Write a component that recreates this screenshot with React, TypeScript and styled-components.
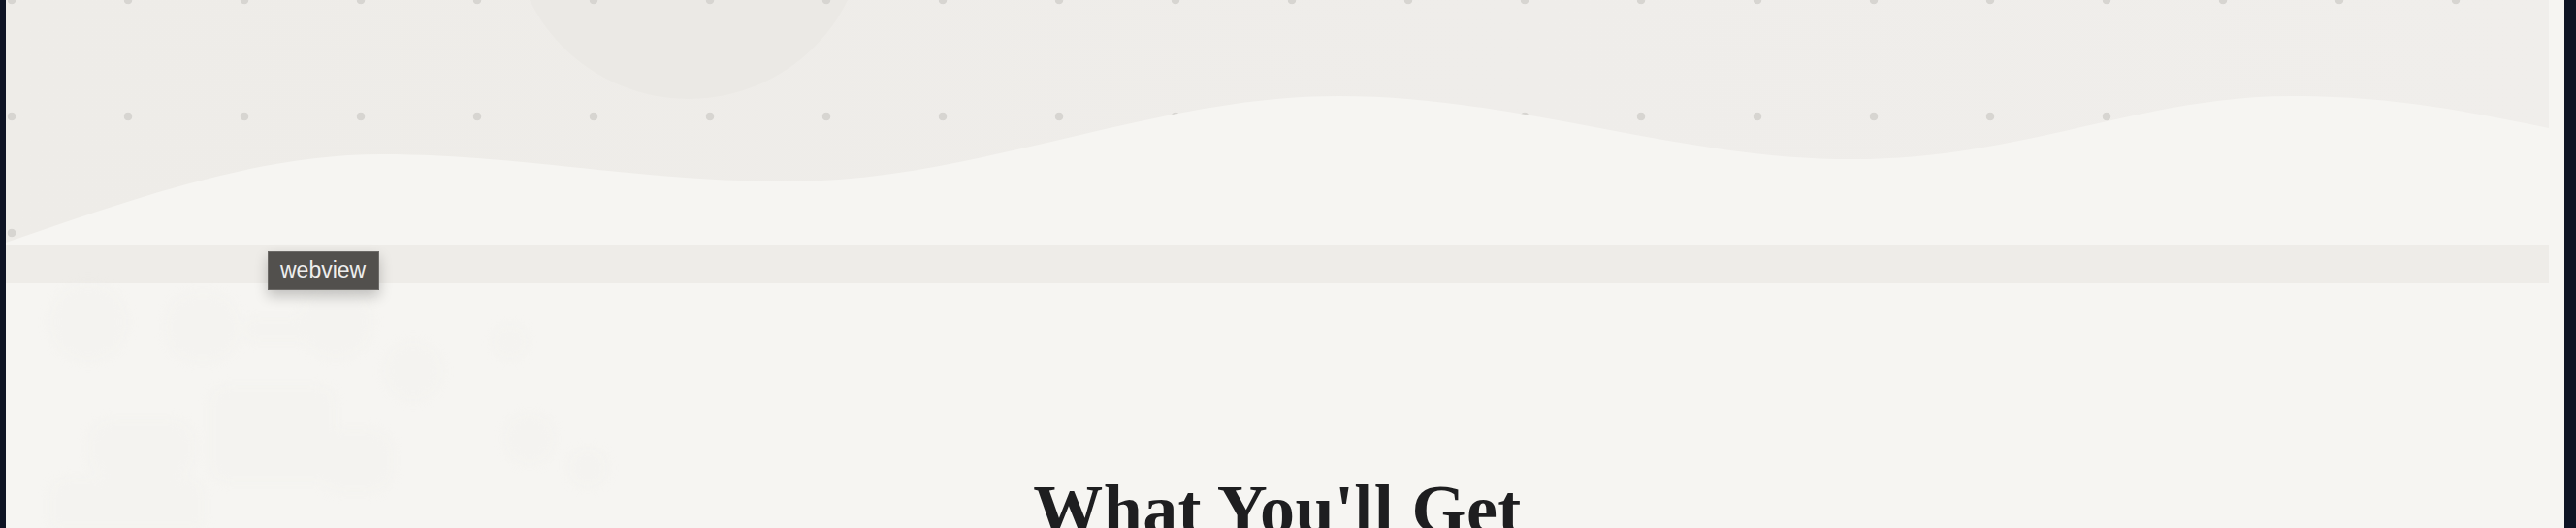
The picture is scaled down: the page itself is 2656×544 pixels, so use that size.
import styled, { createGlobalStyle } from "styled-components";

const Global = createGlobalStyle`
  html, body {
    margin: 0;
    padding: 0;
    background: #0e1424;
    overflow: hidden;
  }
`;

export default function App() {
  return (
    <>
      <Global />
      <Viewport>
        <Hero>
          <Bubble />
          <Dots />
          <Wave viewBox="0 0 2622 252" preserveAspectRatio="none">
            <path
              d="M0,250 C130,205 260,159 387,159 C530,159 650,187 807,187 C1000,187 1180,99 1374,99 C1560,99 1720,164 1904,164 C2080,164 2200,99 2357,99 C2460,99 2540,115 2622,132 L2622,252 L0,252 Z"
              fill="#f6f5f2"
            />
          </Wave>
        </Hero>
        <Strip />
        <Tip>webview</Tip>
        <Features>
          <Ghost viewBox="0 0 1000 252" aria-hidden>
            <g fill="#efebe7" opacity="0.18">
              <circle cx="85" cy="40" r="40" />
              <rect x="165" y="10" width="75" height="70" rx="30" />
              <rect x="245" y="35" width="70" height="25" rx="10" />
              <circle cx="340" cy="40" r="38" />
              <rect x="85" y="140" width="110" height="60" rx="24" />
              <rect x="210" y="105" width="130" height="100" rx="20" />
              <rect x="320" y="150" width="80" height="65" rx="26" />
              <rect x="45" y="200" width="160" height="60" rx="20" />
              <circle cx="420" cy="90" r="30" />
              <circle cx="520" cy="60" r="18" />
              <circle cx="540" cy="160" r="26" />
              <circle cx="600" cy="190" r="20" />
            </g>
          </Ghost>
          <Heading>What You'll Get</Heading>
        </Features>
      </Viewport>
    </>
  );
}

const Viewport = styled.main`
  position: relative;
  height: 544px;
  margin: 0 12px 0 6px;
  background: #f6f5f2;
  overflow: hidden;
`;

const Hero = styled.section`
  position: relative;
  width: calc(100% - 16px);
  height: 252px;
  overflow: hidden;
  background: linear-gradient(90deg, #eeece8 0%, #efedea 60%, #f0eeeb 100%);
`;

const Bubble = styled.div`
  position: absolute;
  left: 521px;
  top: -264px;
  width: 366px;
  height: 366px;
  border-radius: 50%;
  background: #ebe9e5;
`;

const Dots = styled.div`
  position: absolute;
  inset: 0;
  background-image: radial-gradient(circle, #d7d5d1 0 4px, transparent 4.6px);
  background-size: 120px 120px;
  background-position: -54px -60px;
`;

const Wave = styled.svg`
  position: absolute;
  left: 0;
  bottom: 0;
  width: 100%;
  height: 252px;
  display: block;
`;

const Strip = styled.div`
  width: calc(100% - 16px);
  height: 40px;
  background: #eeece8;
`;

const Tip = styled.div`
  position: absolute;
  left: 270px;
  top: 259px;
  z-index: 3;
  box-sizing: border-box;
  height: 40px;
  padding: 0 13px 0 12px;
  background: #52504d;
  border: 1px solid #6c6a67;
  box-shadow: 0 6px 14px rgba(0, 0, 0, 0.22);
  color: #eeeeee;
  font-family: "Liberation Sans", Arial, sans-serif;
  font-size: 23px;
  line-height: 37px;
`;

const Features = styled.section`
  position: relative;
  padding-top: 190px;
  display: flex;
  justify-content: center;
  padding-right: 16px;
`;

const Ghost = styled.svg`
  position: absolute;
  left: 0;
  top: 0;
  width: 1000px;
  height: 252px;
  filter: blur(6px);
`;

const Heading = styled.h2`
  position: relative;
  margin: 0;
  font-family: "Liberation Serif", "Times New Roman", serif;
  font-weight: 700;
  font-size: 72px;
  letter-spacing: 0.4px;
  line-height: 1.2;
  color: #1e1e20;
  white-space: nowrap;
`;
